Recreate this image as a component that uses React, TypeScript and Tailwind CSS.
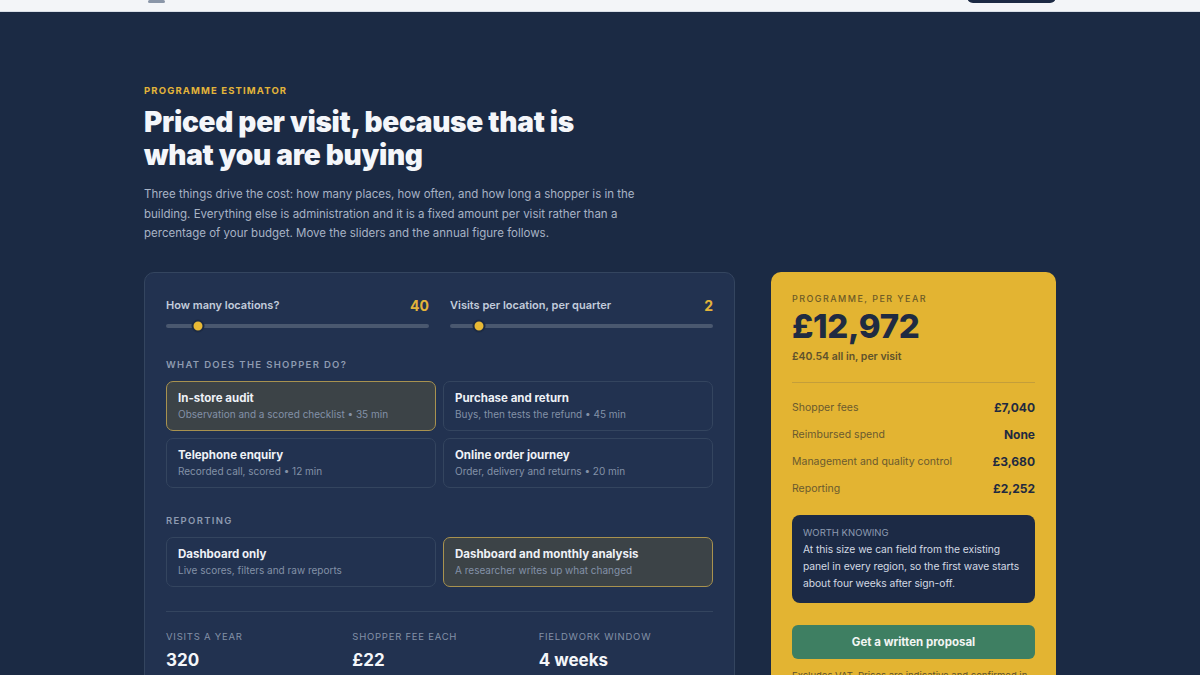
import { useState } from 'react';

const shopperTasks = [
    { id: 'audit', title: 'In-store audit', sub: 'Observation and a scored checklist • 35 min' },
    { id: 'purchase', title: 'Purchase and return', sub: 'Buys, then tests the refund • 45 min' },
    { id: 'phone', title: 'Telephone enquiry', sub: 'Recorded call, scored • 12 min' },
    { id: 'online', title: 'Online order journey', sub: 'Order, delivery and returns • 20 min' },
];

const reportingOptions = [
    { id: 'dash', title: 'Dashboard only', sub: 'Live scores, filters and raw reports' },
    { id: 'analysis', title: 'Dashboard and monthly analysis', sub: 'A researcher writes up what changed' },
];

const breakdown = [
    { label: 'Shopper fees', value: '£7,040' },
    { label: 'Reimbursed spend', value: 'None' },
    { label: 'Management and quality control', value: '£3,680' },
    { label: 'Reporting', value: '£2,252' },
];

const Slider = ({ label, value, pct }: { label: string; value: string; pct: number }) => (
    <div className="flex flex-col">
        <div className="flex items-end justify-between">
            <span className="text-[11px] font-semibold text-[#c3ccdb]">{label}</span>
            <span className="text-[14px] font-bold leading-none text-[#e3b43a]">{value}</span>
        </div>
        <div className="relative mt-[11px] h-[4px] rounded-full bg-[#4a586f]">
            {/* thumb */}
            <div
                className="absolute top-1/2 h-[13px] w-[13px] -translate-x-1/2 -translate-y-1/2 rounded-full border-2 border-[#1c2a44] bg-[#e8b935]"
                style={{ left: `${pct}%` }}
            />
        </div>
    </div>
);

const OptionCard = ({ title, sub, active, onClick }: { title: string; sub: string; active: boolean; onClick: () => void }) => (
    <button
        onClick={onClick}
        className={`flex h-[50px] flex-col justify-center rounded-[7px] border px-[11px] text-left ${
            active ? 'border-[#a8924f] bg-[#3c4347]' : 'border-[#34455f] bg-[#223250]'
        }`}
    >
        <span className="text-[11.5px] font-bold leading-[15px] text-[#eef1f6]">{title}</span>
        <span className="mt-[2px] text-[10px] leading-[13px] text-[#8391a7]">{sub}</span>
    </button>
);

export default function App() {
    const [task, setTask] = useState('audit');
    const [report, setReport] = useState('analysis');

    return (
        <div className="min-h-screen bg-[#1b2a44] font-['Inter','Noto_Sans',sans-serif] text-white">
            {/* Top bar, mostly scrolled away */}
            <div className="h-[12px] overflow-hidden border-b border-[#d8dee7] bg-[#f3f5f8]">
                <div className="mx-auto flex h-full w-[912px] items-end justify-between pb-[8px]">
                    <div className="ml-[4px] h-[3px] w-[17px] rounded-sm bg-[#8a96a8]" />
                    <div className="h-[30px] w-[89px] rounded-[6px] bg-[#1c2a44]" />
                </div>
            </div>

            <div className="mx-auto w-[912px] pt-[72px]">
                <p className="text-[9.5px] font-bold tracking-[0.12em] text-[#e3b43a]">PROGRAMME ESTIMATOR</p>
                <h1 className="mt-[8px] text-[28px] font-black leading-[33px] tracking-[-0.01em] text-[#f4f6fa]">
                    Priced per visit, because that is
                    <br />
                    what you are buying
                </h1>
                <p className="mt-[13px] w-[505px] text-[11.5px] leading-[19.5px] text-[#a8b3c5]">
                    Three things drive the cost: how many places, how often, and how long a shopper is in the building. Everything
                    else is administration and it is a fixed amount per visit rather than a percentage of your budget. Move the
                    sliders and the annual figure follows.
                </p>

                <div className="mt-[28px] flex items-start gap-[36px]">
                    {/* Estimator controls */}
                    <div className="w-[591px] rounded-[10px] border border-[#34455f] bg-[#223250] px-[21px] pt-[24px] pb-[20px]">
                        <div className="grid grid-cols-2 gap-[21px]">
                            <Slider label="How many locations?" value="40" pct={12} />
                            <Slider label="Visits per location, per quarter" value="2" pct={11} />
                        </div>

                        <p className="mt-[30px] text-[9.5px] font-semibold tracking-[0.14em] text-[#8e9bb1]">WHAT DOES THE SHOPPER DO?</p>
                        <div className="mt-[8px] grid grid-cols-2 gap-[7px]">
                            {shopperTasks.map((t) => (
                                <OptionCard key={t.id} title={t.title} sub={t.sub} active={task === t.id} onClick={() => setTask(t.id)} />
                            ))}
                        </div>

                        <p className="mt-[26px] text-[9.5px] font-semibold tracking-[0.14em] text-[#8e9bb1]">REPORTING</p>
                        <div className="mt-[9px] grid grid-cols-2 gap-[7px]">
                            {reportingOptions.map((r) => (
                                <OptionCard key={r.id} title={r.title} sub={r.sub} active={report === r.id} onClick={() => setReport(r.id)} />
                            ))}
                        </div>

                        <div className="mt-[24px] border-t border-[#34455f]" />

                        <div className="mt-[18px] grid grid-cols-3 gap-[12px]">
                            <div>
                                <p className="text-[9.5px] tracking-[0.08em] text-[#8391a7]">VISITS A YEAR</p>
                                <p className="mt-[4px] text-[17px] font-bold text-[#f4f6fa]">320</p>
                            </div>
                            <div>
                                <p className="text-[9.5px] tracking-[0.08em] text-[#8391a7]">SHOPPER FEE EACH</p>
                                <p className="mt-[4px] text-[17px] font-bold text-[#f4f6fa]">£22</p>
                            </div>
                            <div>
                                <p className="text-[9.5px] tracking-[0.08em] text-[#8391a7]">FIELDWORK WINDOW</p>
                                <p className="mt-[4px] text-[17px] font-bold text-[#f4f6fa]">4 weeks</p>
                            </div>
                        </div>
                    </div>

                    {/* Annual total */}
                    <div className="w-[285px] rounded-[10px] bg-[#e3b432] px-[21px] pt-[20px] pb-[20px]">
                        <p className="text-[9px] font-medium tracking-[0.16em] text-[#6d5b27]">PROGRAMME, PER YEAR</p>
                        <p className="mt-[1px] text-[33px] font-extrabold leading-[40px] tracking-[-0.01em] text-[#1f2b42]">£12,972</p>
                        <p className="mt-[3px] text-[10.5px] font-semibold text-[#5f522c]">£40.54 all in, per visit</p>

                        <div className="mt-[17px] border-t border-[#c49e3a]" />

                        <div className="mt-[11px] flex flex-col">
                            {breakdown.map((b) => (
                                <div key={b.label} className="flex h-[27px] items-center justify-between">
                                    <span className="text-[10.5px] text-[#6a5a2f]">{b.label}</span>
                                    <span className="text-[12px] font-bold text-[#1f2a40]">{b.value}</span>
                                </div>
                            ))}
                        </div>

                        <div className="mt-[13px] rounded-[8px] bg-[#1c2a45] px-[11px] py-[11px]">
                            <p className="text-[9.5px] text-[#8e9bb1]">WORTH KNOWING</p>
                            <p className="mt-[1px] text-[10.3px] leading-[17px] tracking-[-0.005em] text-[#d3d9e3]">
                                At this size we can field from the existing panel in every region, so the first wave starts about four
                                weeks after sign-off.
                            </p>
                        </div>

                        <button className="mt-[22px] flex h-[34px] w-full items-center justify-center rounded-[6px] bg-[#3e7f62] text-[11.5px] font-bold text-[#f2f5f3]">
                            Get a written proposal
                        </button>

                        <p className="mt-[10px] text-[9.5px] leading-[14px] text-[#5f522c]">
                            Excludes VAT. Prices are indicative and confirmed in a written proposal after a short call.
                        </p>
                    </div>
                </div>
            </div>
        </div>
    );
}
